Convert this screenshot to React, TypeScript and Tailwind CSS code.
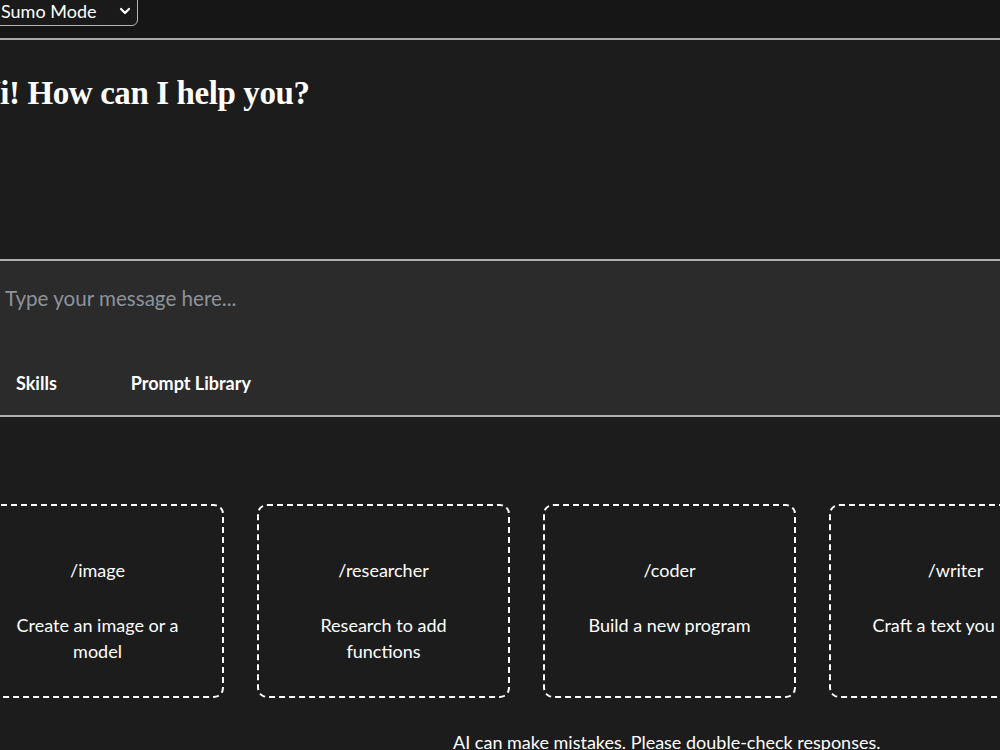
import { ChevronDown } from 'lucide-react';

type Skill = { command: string; blurb: string };

const SKILLS: Skill[] = [
  { command: '/image',      blurb: 'Create an image or a model' },
  { command: '/researcher', blurb: 'Research to add functions' },
  { command: '/coder',      blurb: 'Build a new program' },
  { command: '/writer',     blurb: 'Craft a text you need' },
];

function SkillCard({ skill }: { skill: Skill }) {
  return (
    <div className="w-[253px] h-[194px] flex-shrink-0 rounded-[10px] border-2 border-dashed border-white px-[36px] pt-[51px] text-center text-[18px] text-white">
      <p className="leading-[26px]">{skill.command}</p>
      <p className="mt-[29px] leading-[26px]">{skill.blurb}</p>
    </div>
  );
}

export default function App() {
  return (
    <div
      className="w-[1000px] h-[750px] overflow-hidden bg-[#1c1c1c] text-white"
      style={{ fontFamily: 'Lato, "Open Sans", sans-serif' }}
    >
      {/* ── Top bar ── */}
      <header className="h-[40px] flex items-start bg-[#161616] border-b-2 border-[#a8a8a8]">
        <div className="-ml-[60px] -mt-[6px] w-[198px] h-[32px] rounded-md border border-[#b5b5b5] bg-[#1a1a1a] flex items-center justify-between pl-[60px] pr-[4px]">
          <span className="text-[18px] leading-none pt-[2px]">Sumo Mode</span>
          <ChevronDown className="w-4 h-4 mt-[2px]" strokeWidth={3.2} />
        </div>
      </header>

      {/* ── Greeting ── */}
      <div className="h-[219px] pt-[33px]">
        <h1
          className="-ml-[25px] text-[33px] font-bold leading-[40px] tracking-[-0.4px]"
          style={{ fontFamily: '"Liberation Serif", "DejaVu Serif", serif' }}
        >
          Hi! How can I help you?
        </h1>
      </div>

      {/* ── Composer ── */}
      <div className="h-[158px] bg-[#2b2b2b] border-y-2 border-[#b0b0b0] flex flex-col">
        <input
          className="mt-[24px] ml-[5px] w-[900px] bg-transparent text-[20.6px] leading-[26px] text-white placeholder:text-[#8d939b] outline-none"
          placeholder="Type your message here..."
        />
        <div className="mt-auto mb-[19px] flex items-center text-[18px] font-bold">
          <button className="ml-[16px] leading-[26px]">Skills</button>
          <button className="ml-[74px] leading-[26px]">Prompt Library</button>
        </div>
      </div>

      {/* ── Skill shortcuts ── */}
      <div className="mt-[87px] -ml-[29px] flex gap-[33px]">
        {SKILLS.map(s => (
          <SkillCard key={s.command} skill={s} />
        ))}
      </div>

      <p className="mt-[31px] ml-[453px] text-[18px] leading-[26px] whitespace-nowrap">
        AI can make mistakes. Please double-check responses.
      </p>
    </div>
  );
}
